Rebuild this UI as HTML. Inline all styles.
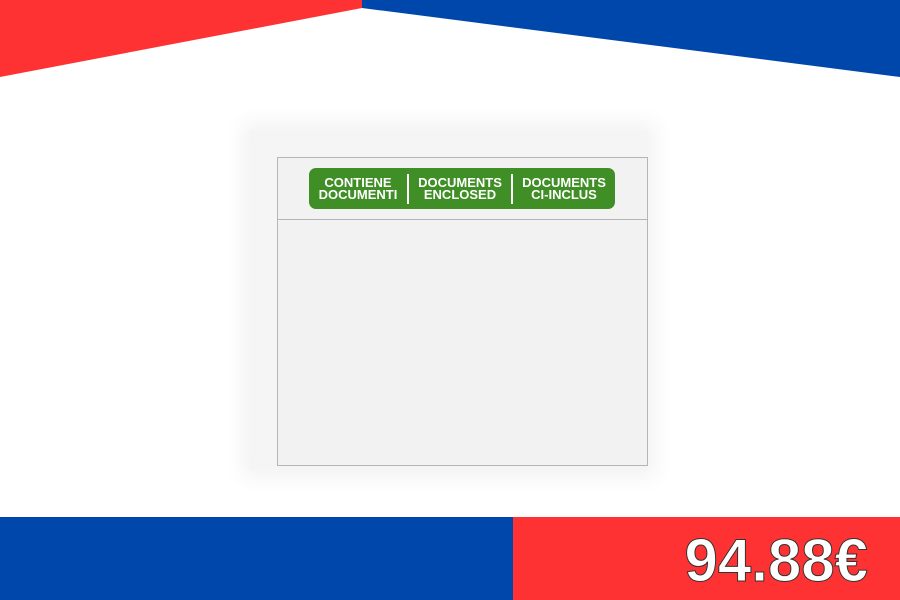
<!DOCTYPE html>
<html><head><meta charset="utf-8"><style>
body{margin:0;width:900px;height:600px;position:relative;overflow:hidden;background:#fff;font-family:"Liberation Sans",sans-serif}
.abs{position:absolute}
</style></head><body>
<svg class="abs" style="left:0;top:0" width="900" height="80">
<polygon points="0,0 362,0 362,8 0,77" fill="#fe3232"/>
<polygon points="362,0 900,0 900,77 362,8" fill="#0047ab"/>
</svg>
<div class="abs" style="left:250px;top:130px;width:398px;height:340px;background:#f5f5f5;box-shadow:0 0 20px 8px #f3f3f3"></div>
<div class="abs" style="left:277px;top:157px;width:369px;height:307px;border:1px solid #b5b5b5;background:#f2f2f2"></div>
<div class="abs" style="left:278px;top:219px;width:369px;height:1px;background:#b5b5b5"></div>
<div class="abs" style="left:309px;top:168px;width:306px;height:41px;background:#3f8f26;border-radius:7px;color:#fff;font-weight:bold;font-size:13px;line-height:12px;display:flex;align-items:center;text-align:center">
<div style="width:98px">CONTIENE<br>DOCUMENTI</div>
<div style="width:2px;height:30px;background:#fff"></div>
<div style="width:102px">DOCUMENTS<br>ENCLOSED</div>
<div style="width:2px;height:30px;background:#fff"></div>
<div style="width:102px">DOCUMENTS<br>CI-INCLUS</div>
</div>
<div class="abs" style="left:0;top:517px;width:513px;height:83px;background:#0047ab"></div>
<div class="abs" style="left:513px;top:517px;width:387px;height:83px;background:#fe3232"></div>
<div class="abs" style="right:32px;top:526px;color:#fff;font-weight:bold;font-size:60px;line-height:70px;-webkit-text-stroke:1px #333">94.88€</div>
</body></html>
